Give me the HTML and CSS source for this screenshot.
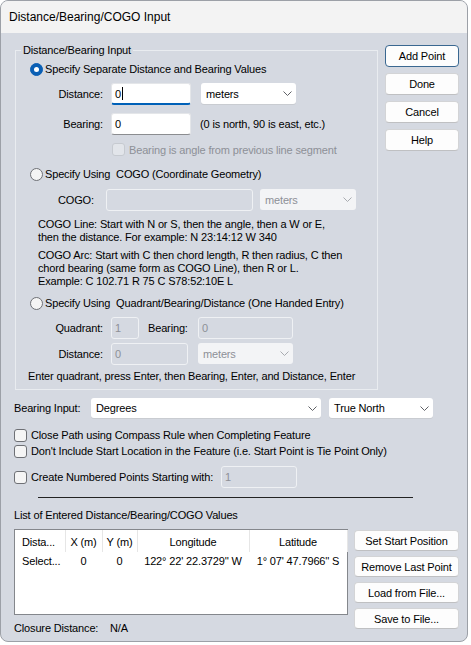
FILE: index.html
```html
<!DOCTYPE html>
<html lang="en">
<head>
<meta charset="utf-8">
<title>Distance/Bearing/COGO Input</title>
<link rel="stylesheet" href="styles.css">
</head>
<body>
<div class="win">
  <div class="titlebar">Distance/Bearing/COGO Input</div>
  <div class="content">
    <div class="top">
      <div class="group">
        <span class="legend">Distance/Bearing Input</span>
        <div class="row opt opt1"><span class="radio on"><span class="dot"></span></span><span>Specify Separate Distance and Bearing Values</span></div>
        <div class="row field f-dist">
          <span class="lbl">Distance:</span>
          <span class="input focus w80">0<span class="caret"></span></span>
          <span class="select w95 ml10">meters<svg class="chev" width="9" height="5" viewBox="0 0 9 5"><polyline points="0.5,0.5 4.5,4.5 8.5,0.5"/></svg></span>
        </div>
        <div class="row field f-bear">
          <span class="lbl">Bearing:</span>
          <span class="input w80">0</span>
          <span class="hint">(0 is north, 90 is east, etc.)</span>
        </div>
        <div class="row chk-bear disabled">
          <span class="check dis"></span><span>Bearing is angle from previous line segment</span>
        </div>
        <div class="row opt opt2"><span class="radio"></span><span>Specify Using&nbsp; COGO (Coordinate Geometry)</span></div>
        <div class="row field f-cogo">
          <span class="lbl2">COGO:</span>
          <span class="input dis w147"></span>
          <span class="select dis w96 ml7">meters<svg class="chev" width="9" height="5" viewBox="0 0 9 5"><polyline points="0.5,0.5 4.5,4.5 8.5,0.5"/></svg></span>
        </div>
        <p class="para p1">COGO Line: Start with N or S, then the angle, then a W or E,<br>then the distance. For example: N 23:14:12 W 340</p>
        <p class="para p2">COGO Arc: Start with C then chord length, R then radius, C then<br>chord bearing (same form as COGO Line), then R or L.<br>Example: C 102.71 R 75 C S78:52:10E L</p>
        <div class="row opt opt3"><span class="radio"></span><span>Specify Using&nbsp; Quadrant/Bearing/Distance (One Handed Entry)</span></div>
        <div class="row field f-quad">
          <span class="lbl">Quadrant:</span>
          <span class="input dis w28">1</span>
          <span class="lbl3">Bearing:</span>
          <span class="input dis w95">0</span>
        </div>
        <div class="row field f-qdist">
          <span class="lbl">Distance:</span>
          <span class="input dis w77">0</span>
          <span class="select dis w95 ml10">meters<svg class="chev" width="9" height="5" viewBox="0 0 9 5"><polyline points="0.5,0.5 4.5,4.5 8.5,0.5"/></svg></span>
        </div>
        <div class="note">Enter quadrant, press Enter, then Bearing, Enter, and Distance, Enter</div>
      </div>
      <div class="btncol">
        <button class="btn default">Add Point</button>
        <button class="btn">Done</button>
        <button class="btn">Cancel</button>
        <button class="btn">Help</button>
      </div>
    </div>

    <div class="row brow">
      <span class="blbl">Bearing Input:</span>
      <span class="select w230">Degrees<svg class="chev" width="9" height="5" viewBox="0 0 9 5"><polyline points="0.5,0.5 4.5,4.5 8.5,0.5"/></svg></span>
      <span class="select w104 ml8">True North<svg class="chev" width="9" height="5" viewBox="0 0 9 5"><polyline points="0.5,0.5 4.5,4.5 8.5,0.5"/></svg></span>
    </div>
    <div class="row crow c1"><span class="check"></span><span>Close Path using Compass Rule when Completing Feature</span></div>
    <div class="row crow c2"><span class="check"></span><span>Don't Include Start Location in the Feature (i.e. Start Point is Tie Point Only)</span></div>
    <div class="row crow c3"><span class="check"></span><span class="clbl">Create Numbered Points Starting with:</span><span class="input dis w76">1</span></div>
    <div class="sep"></div>
    <div class="listlbl">List of Entered Distance/Bearing/COGO Values</div>
    <div class="lower">
      <div class="leftcol">
        <div class="list">
          <table class="grid">
            <colgroup><col class="c-a"><col class="c-b"><col class="c-c"><col class="c-d"><col class="c-e"></colgroup>
            <thead>
              <tr><th class="tl">Dista...</th><th>X (m)</th><th>Y (m)</th><th>Longitude</th><th>Latitude</th></tr>
            </thead>
            <tbody>
              <tr><td class="tl">Select...</td><td>0</td><td>0</td><td>122° 22' 22.3729'' W</td><td>1° 07' 47.7966'' S</td></tr>
            </tbody>
          </table>
        </div>
        <div class="closure"><span class="cl-lbl">Closure Distance:</span><span>N/A</span></div>
      </div>
      <div class="rbtns">
        <button class="btn wide">Set Start Position</button>
        <button class="btn wide">Remove Last Point</button>
        <button class="btn wide">Load from File...</button>
        <button class="btn wide">Save to File...</button>
      </div>
    </div>
  </div>
</div>
</body>
</html>
```

FILE: styles.css
```css
* { box-sizing: border-box; margin: 0; padding: 0; }
html, body { background: #ffffff; }
body {
  font-family: "Liberation Sans", Arial, sans-serif;
  font-size: 11px;
  line-height: 14px;
  letter-spacing: -0.15px;
  color: #000;
  white-space: nowrap;
}
.win {
  width: 468px;
  height: 642px;
  border: 1px solid #9ca0a7;
  border-radius: 8px;
  overflow: hidden;
  background: #d5d9e1;
}
.titlebar {
  height: 32px;
  line-height: 32px;
  padding-left: 8px;
  background: #f3f3f3;
  font-size: 12px;
  letter-spacing: 0;
}
.content { padding: 12px 0 0 13px; }

.top { display: flex; align-items: flex-start; gap: 7px; }
.group {
  position: relative;
  margin: 5px 0 0 1px;
  width: 363px;
  height: 340px;
  border: 1px solid #e9ecf0;
  padding-top: 11px;
}
.legend {
  position: absolute;
  top: -8px;
  left: 5px;
  padding: 0 2px;
  background: #d5d9e1;
}
.row { display: flex; align-items: center; }
.opt { height: 14px; padding-left: 14px; gap: 2px; }
.field { height: 22px; align-items: flex-start; }
.f-dist { margin-top: 7px; }
.f-bear { margin-top: 8px; align-items: center; }
.chk-bear { margin-top: 8px; height: 13px; padding-left: 96px; gap: 4px; }
.disabled { color: #8d9097; }
.opt2 { margin-top: 11px; }
.f-cogo { margin-top: 8px; }
.para { padding-left: 22px; line-height: 13px; }
.p1 { margin-top: 7px; }
.p2 { margin-top: 5px; }
.opt3 { margin-top: 8px; }
.f-quad { margin-top: 7px; }
.f-qdist { margin-top: 4px; }
.note { margin-top: 4px; padding-left: 12px; height: 14px; }

.lbl { width: 87px; margin-right: 8px; text-align: right; align-self: center; }
.lbl2 { width: 48px; margin-left: 42px; align-self: center; }
.lbl3 { width: 50px; margin-left: 9px; align-self: center; }
.hint { margin-left: 9px; }

.input {
  display: flex;
  align-items: center;
  height: 22px;
  padding-left: 3px;
  background: #fff;
  border: 1px solid #e4e6e9;
  border-bottom-color: #8b8d90;
  border-radius: 3px;
}
.input.focus { border-bottom: 2px solid #0061b8; }
.input.dis {
  background: transparent;
  border: 1px solid #eff1f4;
  color: #8d9097;
}
.caret { display: inline-block; width: 1px; height: 13px; background: #000; margin-left: 1px; }
.w28 { width: 28px; }
.w76 { width: 76px; }
.w77 { width: 77px; }
.w80 { width: 80px; }
.w95 { width: 95px; }
.w96 { width: 96px; }
.w104 { width: 104px; }
.w147 { width: 147px; }
.w230 { width: 230px; }
.ml7 { margin-left: 7px; }
.ml8 { margin-left: 8px; }
.ml10 { margin-left: 10px; }

.select {
  display: flex;
  align-items: center;
  justify-content: space-between;
  height: 21px;
  padding: 0 4px 0 5px;
  background: #fff;
  border-radius: 3px;
  box-shadow: 0 1px 0 #c9ccd1;
}
.select.dis { background: #f3f4f6; color: #8d9097; box-shadow: none; }
.chev { fill: none; stroke: #5f6166; stroke-width: 1; }
.select.dis .chev { stroke: #a8abb0; }

.radio {
  width: 13px;
  height: 13px;
  border-radius: 50%;
  border: 1px solid #6e7075;
  background: #f4f4f4;
  flex: none;
}
.radio.on {
  display: flex;
  align-items: center;
  justify-content: center;
  background: #0a5fb4;
  border-color: #0a5fb4;
}
.radio.on .dot { width: 5px; height: 5px; border-radius: 50%; background: #fff; }

.check {
  width: 13px;
  height: 13px;
  border: 1px solid #6e7075;
  border-radius: 3px;
  background: #f5f5f5;
  flex: none;
}
.check.dis { border-color: #c6cad0; background: #e2e5ea; }

.btncol { display: flex; flex-direction: column; gap: 6px; width: 74px; }
.btn {
  height: 22px;
  background: #fdfdfd;
  border: 1px solid #d3d4d6;
  border-bottom-color: #bfc0c2;
  border-radius: 4px;
  font: inherit;
  letter-spacing: inherit;
  color: #000;
}
.btn.default { border: 1px solid #3a6891; }

.brow { margin-top: 8px; height: 20px; align-items: flex-start; }
.blbl { width: 77px; align-self: center; }
.brow .select { height: 20px; }
.crow { gap: 4px; }
.c1 { margin-top: 10px; height: 14px; }
.c2 { margin-top: 2px; height: 14px; }
.c3 { margin-top: 8px; height: 22px; }
.clbl { width: 186px; }
.sep { margin: 9px 0 0 24px; width: 375px; height: 1px; background: #232323; }
.listlbl { margin-top: 10px; height: 14px; }
.lower { display: flex; gap: 6px; margin-top: 7px; }
.list {
  width: 334px;
  height: 86px;
  border: 1px solid #84878c;
  background: #fff;
}
.grid { width: 332px; table-layout: fixed; border-collapse: collapse; }
.c-a { width: 50px; }
.c-b { width: 37px; }
.c-c { width: 35px; }
.c-d { width: 112px; }
.c-e { width: 98px; }
.grid th {
  height: 22px;
  padding-top: 5px;
  vertical-align: top;
  font-weight: normal;
  text-align: center;
  border-right: 1px solid #e6e6e6;
}
.grid td {
  padding-top: 2px;
  text-align: center;
}
.grid .tl { text-align: left; padding-left: 7px; }
.closure { margin-top: 6px; height: 14px; display: flex; }
.cl-lbl { width: 96px; }
.rbtns { display: flex; flex-direction: column; gap: 5px; padding-top: 1px; }
.btn.wide { width: 105px; height: 21px; }
```
